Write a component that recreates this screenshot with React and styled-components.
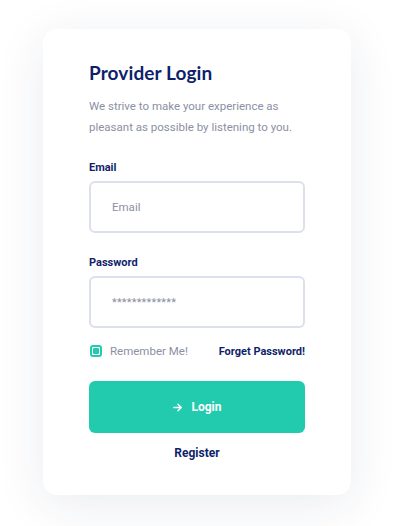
import styled, { createGlobalStyle } from 'styled-components';

const GlobalStyle = createGlobalStyle`
    html, body {
        margin: 0;
        padding: 0;
        background: #ffffff;
    }
    * {
        box-sizing: border-box;
    }
`;

const App = () => {
    return (
        <>
            <GlobalStyle />
            <Page>
                <Card>
                    <Title>Provider Login</Title>
                    <Intro>We strive to make your experience as pleasant as possible by listening to you.</Intro>

                    <Field $gap="22px">
                        <Label>Email</Label>
                        <Input type="text" placeholder="Email" />
                    </Field>

                    <Field $gap="22px">
                        <Label>Password</Label>
                        <Input type="text" placeholder="*************" $stars />
                    </Field>

                    <OptionsRow>
                        <Remember>
                            <CheckBox><span /></CheckBox>
                            Remember Me!
                        </Remember>
                        <TextLink>Forget Password!</TextLink>
                    </OptionsRow>

                    <LoginButton>
                        <svg width="11" height="11" viewBox="0 0 24 24" fill="none" stroke="currentColor" strokeWidth="3" strokeLinecap="round" strokeLinejoin="round">
                            <path d="M4 12h16" />
                            <path d="M13 5l7 7-7 7" />
                        </svg>
                        Login
                    </LoginButton>

                    <Register>Register</Register>
                </Card>
            </Page>
        </>
    );
};

const Page = styled.div`
    width: 400px;
    height: 526px;
    padding: 29px 49px 31px 43px;
    background: #ffffff;
    font-family: Roboto, "Liberation Sans", sans-serif;
`;

const Card = styled.div`
    width: 308px;
    height: 466px;
    background: #ffffff;
    border-radius: 14px;
    box-shadow: 0 10px 50px rgba(30, 40, 90, 0.09);
    padding: 33px 46px 0 46px;
    display: flex;
    flex-direction: column;
`;

const Title = styled.h1`
    margin: 0;
    font-family: "Lato", "Open Sans", sans-serif;
    font-size: 19px;
    font-weight: 700;
    letter-spacing: 0.1px;
    color: #101f6b;
    line-height: 22px;
`;

const Intro = styled.p`
    margin: 12px 0 0 0;
    width: 220px;
    font-size: 11.5px;
    line-height: 21px;
    color: #8b90a3;
`;

const Field = styled.div`
    display: flex;
    flex-direction: column;
    margin-top: ${p => p.$gap};
`;

const Label = styled.label`
    font-size: 11px;
    font-weight: 700;
    color: #101f6b;
    line-height: 16px;
`;

const Input = styled.input`
    margin-top: 5px;
    width: 216px;
    height: 52px;
    border: 2px solid #dbe0ec;
    border-radius: 6px;
    padding: 0 21px;
    font-family: Roboto, "Liberation Sans", sans-serif;
    font-size: ${p => (p.$stars ? '11px' : '11.5px')};
    color: #8b90a3;
    outline: none;
    &::placeholder {
        color: #8b90a3;
        letter-spacing: ${p => (p.$stars ? '0.2px' : '0')};
    }
`;

const OptionsRow = styled.div`
    display: flex;
    align-items: center;
    justify-content: space-between;
    margin-top: 16px;
    width: 216px;
    height: 14px;
`;

const Remember = styled.div`
    display: flex;
    align-items: center;
    gap: 8px;
    font-size: 11.5px;
    color: #8b90a3;
    margin-left: 1px;
`;

const CheckBox = styled.span`
    width: 12px;
    height: 12px;
    border: 2px solid #22cbad;
    border-radius: 3px;
    display: flex;
    align-items: center;
    justify-content: center;
    span {
        width: 6px;
        height: 6px;
        background: #22cbad;
        border-radius: 1px;
    }
`;

const TextLink = styled.a`
    font-size: 11px;
    font-weight: 700;
    color: #101f6b;
    cursor: pointer;
`;

const LoginButton = styled.button`
    margin-top: 23px;
    width: 216px;
    height: 52px;
    border: none;
    border-radius: 6px;
    background: #22cbad;
    color: #ffffff;
    font-family: Roboto, "Liberation Sans", sans-serif;
    font-size: 12px;
    font-weight: 700;
    display: flex;
    align-items: center;
    justify-content: center;
    gap: 8px;
    cursor: pointer;
`;

const Register = styled.a`
    margin-top: 12px;
    width: 216px;
    line-height: 16px;
    text-align: center;
    font-size: 12px;
    font-weight: 700;
    color: #101f6b;
    cursor: pointer;
`;

export default App;
